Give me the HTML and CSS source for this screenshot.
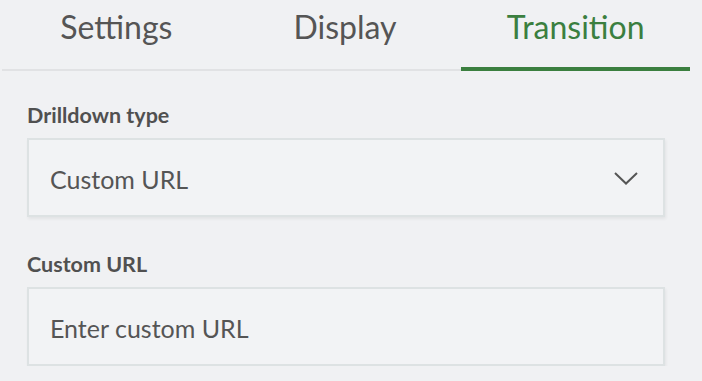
FILE: index.html
```html
<!DOCTYPE html>
<html lang="en">
<head>
  <meta charset="UTF-8">
  <title>Drilldown settings</title>
  <link rel="stylesheet" href="styles.css">
</head>
<body>
  <div class="panel">
    <div class="tabs">
      <div class="tab">Settings</div>
      <div class="tab">Display</div>
      <div class="tab active">Transition</div>
    </div>
    <div class="form">
      <div class="field">
        <label class="label">Drilldown type</label>
        <div class="box select">
          <span>Custom URL</span>
          <svg class="chevron" width="24" height="13" viewBox="0 0 24 13">
            <polyline points="1,1 12,11.5 23,1" fill="none" stroke="#555" stroke-width="2"/>
          </svg>
        </div>
      </div>
      <div class="field">
        <label class="label">Custom URL</label>
        <div class="box input">
          <span class="placeholder">Enter custom URL</span>
        </div>
      </div>
    </div>
  </div>
</body>
</html>
```

FILE: styles.css
```css
body {
  margin: 0;
  background-color: #f0f1f3;
  font-family: Lato, "Noto Sans", sans-serif;
  color: #555;
  overflow: hidden;
}
.panel {
  width: 702px;
}
.tabs {
  display: flex;
  margin-left: 2px;
  width: 688px;
  border-bottom: 2px solid #e1e2e4;
}
.tab {
  flex: 1;
  text-align: center;
  font-size: 32px;
  line-height: 1.2;
  padding-top: 8px;
  height: 59px;
  border-bottom: 4px solid transparent;
  margin-bottom: -2px;
  color: #555;
}
.tab.active {
  color: #3b7f3f;
  border-bottom-color: #3b7f3f;
  margin-left: 2px;
}
.form {
  padding: 31px 37px 0 27px;
}
.field {
  margin-bottom: 34px;
}
.field:last-child {
  margin-bottom: 0;
}
.label {
  display: block;
  font-size: 21.5px;
  font-weight: bold;
  line-height: 26px;
  color: #505050;
  margin-bottom: 10px;
}
.box {
  display: flex;
  align-items: center;
  justify-content: space-between;
  box-sizing: border-box;
  height: 79px;
  padding: 2px 25px 0 21px;
  background-color: #f2f3f5;
  border: 2px solid #dde2e3;
  box-shadow: 1px 2px 3px rgba(0, 0, 0, 0.06);
  font-size: 25px;
  line-height: 1.2;
  color: #555;
}
.chevron {
  display: block;
}
```
